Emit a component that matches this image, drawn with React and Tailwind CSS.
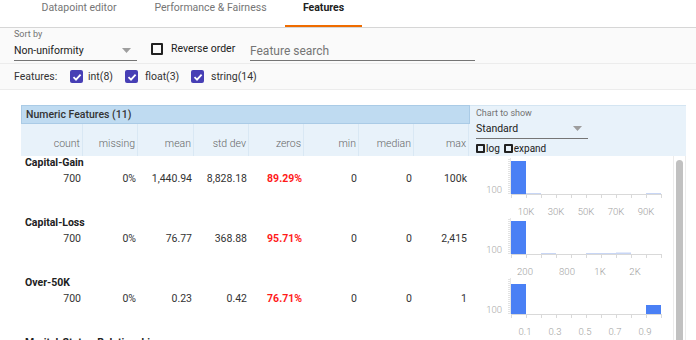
import { useState } from "react"

const columns = [
  { label: "count", w: "w-[62px]" },
  { label: "missing", w: "w-[55px]" },
  { label: "mean", w: "w-[56px]" },
  { label: "std dev", w: "w-[55px]" },
  { label: "zeros", w: "w-[55px]" },
  { label: "min", w: "w-[55px]" },
  { label: "median", w: "w-[55px]" },
  { label: "max", w: "w-[55px]" },
]

const rows = [
  {
    name: "Capital-Gain",
    values: ["700", "0%", "1,440.94", "8,828.18", "89.29%", "0", "0", "100k"],
    bars: [
      { x: 41, w: 15, top: 5 },
      { x: 56, w: 15, top: 37 },
      { x: 176, w: 15, top: 37 },
    ],
    labels: [
      { x: 56, t: "10K" },
      { x: 86, t: "30K" },
      { x: 116, t: "50K" },
      { x: 146, t: "70K" },
      { x: 176, t: "90K" },
    ],
  },
  {
    name: "Capital-Loss",
    values: ["700", "0%", "76.77", "368.88", "95.71%", "0", "0", "2,415"],
    bars: [
      { x: 41, w: 15, top: 5 },
      { x: 71, w: 15, top: 37 },
      { x: 116, w: 30, top: 37 },
      { x: 146, w: 15, top: 36.5 },
    ],
    labels: [
      { x: 55, t: "200" },
      { x: 97, t: "800" },
      { x: 130, t: "1K" },
      { x: 165, t: "2K" },
    ],
  },
  {
    name: "Over-50K",
    values: ["700", "0%", "0.23", "0.42", "76.71%", "0", "0", "1"],
    bars: [
      { x: 41, w: 15, top: 8 },
      { x: 176, w: 15, top: 29 },
    ],
    labels: [
      { x: 55, t: "0.1" },
      { x: 85, t: "0.3" },
      { x: 115, t: "0.5" },
      { x: 145, t: "0.7" },
      { x: 175, t: "0.9" },
    ],
  },
  {
    name: "Marital-Status-Relationship",
    values: ["700", "0%", "40.62", "12.35", "0%", "1", "40", "99"],
    bars: [],
    labels: [],
  },
]

const Box = ({ size = "w-[12px] h-[12px]" }) => (
  <span className={`${size} border-2 border-[#212121] rounded-[1px] inline-block flex-none`} />
)

const Checked = () => (
  <span className="w-[13px] h-[13px] rounded-[2px] bg-[#473fb5] flex items-center justify-center flex-none">
    <svg width="10" height="10" viewBox="0 0 10 10">
      <path d="M1.5 5.2 L4 7.6 L8.6 2.6" fill="none" stroke="white" strokeWidth="1.8" />
    </svg>
  </span>
)

const Caret = () => (
  <svg width="9" height="5" viewBox="0 0 9 5">
    <path d="M0 0 L9 0 L4.5 5 Z" fill="#9e9e9e" />
  </svg>
)

const Histogram = ({ bars, labels }) => {
  const ticks = []
  for (let i = 0; i <= 10; i++) ticks.push(41 + i * 15)
  const minor = []
  for (let y = 3; y < 38; y += 2) minor.push(y)
  if (bars.length === 0) return <svg width="203" height="60" />
  return (
    <svg width="203" height="60" className="block">
      {minor.map((y) => (
        <line key={y} x1="38" x2="41" y1={y + 0.5} y2={y + 0.5} stroke="#e2e2e2" />
      ))}
      <line x1="40.5" x2="40.5" y1="2" y2="38" stroke="#e6e6e6" />
      {bars.map((b, i) => (
        <rect key={i} x={b.x} y={b.top} width={b.w} height={38 - b.top} fill={b.top > 35 ? "#c8d6f5" : "#4a80f5"} />
      ))}
      <line x1="41" x2="191" y1="38.5" y2="38.5" stroke="#d9d9d9" />
      {ticks.map((x) => (
        <line key={x} x1={x + 0.5} x2={x + 0.5} y1="38" y2="42" stroke="#d9d9d9" />
      ))}
      <text x="32" y="37" textAnchor="end" fontSize="9.5" fill="#a6a6a6" fontFamily="Roboto, sans-serif" fontWeight="300">
        100
      </text>
      {labels.map((l) => (
        <text
          key={l.t}
          x={l.x}
          y="59"
          textAnchor="middle"
          fontSize="9.5"
          fill="#9e9e9e"
          fontFamily="Roboto, sans-serif"
          fontWeight="300"
        >
          {l.t}
        </text>
      ))}
    </svg>
  )
}

const App = () => {
  const [tab] = useState("Features")
  const tabs = [
    { name: "Datapoint editor", w: "w-[114px]" },
    { name: "Performance & Fairness", w: "w-[149px]" },
    { name: "Features", w: "w-[77px]" },
  ]
  return (
    <div className="w-[696px] h-[340px] overflow-hidden bg-white [font-family:Roboto,sans-serif] text-[#212121]">
      <div className="h-[28px] border-b border-[#d6d6d6] flex pl-[22px]">
        {tabs.map((t) => (
          <div
            key={t.name}
            className={`${t.w} h-[27px] flex items-start justify-center pt-[1px] text-[10.5px] leading-[14px] ${
              t.name === tab ? "font-bold text-[#212121] border-b-2 border-[#ef6c00]" : "text-[#757575]"
            }`}
          >
            {t.name}
          </div>
        ))}
      </div>

      <div className="h-[36px] bg-[#fafafa] border-b border-[#ececec] flex items-start pl-[14px]">
        <div className="w-[123px]">
          <div className="text-[9px] leading-[12px] text-[#737373]">Sort by</div>
          <div className="mt-[1px] h-[20px] border-b border-[#757575] flex items-center justify-between pr-[6px] text-[10.5px]">
            <span>Non-uniformity</span>
            <Caret />
          </div>
        </div>
        <div className="ml-[14px] w-[99px] mt-[14px] h-[14px] flex items-center gap-[8px] text-[10.5px] whitespace-nowrap">
          <Box />
          <span>Reverse order</span>
        </div>
        <div className="mt-[13px] w-[225px] h-[20px] border-b border-[#757575] flex items-center text-[12px] text-[#757575]">
          Feature search
        </div>
      </div>

      <div className="h-[26px] bg-[#fafafa] border-b border-[#ececec] flex items-center pl-[14px] text-[10.5px] text-[#333]">
        <span className="w-[56px]">Features:</span>
        <Checked />
        <span className="ml-[5px] w-[37px]">int(8)</span>
        <Checked />
        <span className="ml-[7px] w-[46px]">float(3)</span>
        <Checked />
        <span className="ml-[7px]">string(14)</span>
      </div>

      <div className="pl-[21px] pt-[15px]">
        <div className="flex">
          <div className="w-[449px]">
            <div className="h-[19px] bg-[#bfdbf1] border border-[#aacbe6] flex items-center pl-[4px] text-[10.5px] font-medium text-[#333]">
              Numeric Features (11)
            </div>
            <div className="h-[32px] bg-[#e8f2fa] flex">
              {columns.map((c) => (
                <div
                  key={c.label}
                  className={`${c.w} border-r border-[#d9e8f4] text-right pr-[2px] pt-[13px] text-[10.5px] leading-[14px] font-light text-[#666]`}
                >
                  {c.label}
                </div>
              ))}
            </div>
          </div>
          <div className="w-[216px] h-[51px] bg-[#e8f2fa] border-t border-[#d4e5f2] pl-[6px]">
            <div className="text-[9px] leading-[12px] text-[#737373] pt-[1px]">Chart to show</div>
            <div className="w-[112px] h-[20px] border-b border-[#757575] flex items-center justify-between pr-[6px] text-[10.5px]">
              <span>Standard</span>
              <Caret />
            </div>
            <div className="flex items-center h-[16px] mt-[1px] text-[10px] text-[#212121]">
              <Box size="w-[9px] h-[9px]" />
              <span className="ml-[1px]">log</span>
              <span className="ml-[4px]" />
              <Box size="w-[9px] h-[9px]" />
              <span className="ml-[1px]">expand</span>
            </div>
          </div>
        </div>

        <div className="flex">
          <div className="w-[652px]">
            {rows.map((r) => (
              <div key={r.name} className="flex h-[60px]">
                <div className="w-[449px]">
                  <div className="pl-[4px] text-[10.5px] leading-[14px] font-bold text-[#212121]">{r.name}</div>
                  <div className="flex mt-[2px] text-[10.5px] leading-[14px] text-[#333]">
                    {r.values.map((v, i) => (
                      <div
                        key={i}
                        className={`${columns[i].w} text-right pr-[2px] ${i === 4 && v !== "0%" ? "text-[#ff1a1a] font-bold" : ""}`}
                      >
                        {v}
                      </div>
                    ))}
                  </div>
                </div>
                <div className="w-[203px]">
                  <Histogram bars={r.bars} labels={r.labels} />
                </div>
              </div>
            ))}
          </div>
          <div className="w-[13px] h-[200px] border-x border-[#ececec] flex justify-center pt-[4px]">
            <div className="w-[7px] h-full rounded-t-full bg-[#c1c1c1]" />
          </div>
        </div>
      </div>
    </div>
  )
}

export default App
